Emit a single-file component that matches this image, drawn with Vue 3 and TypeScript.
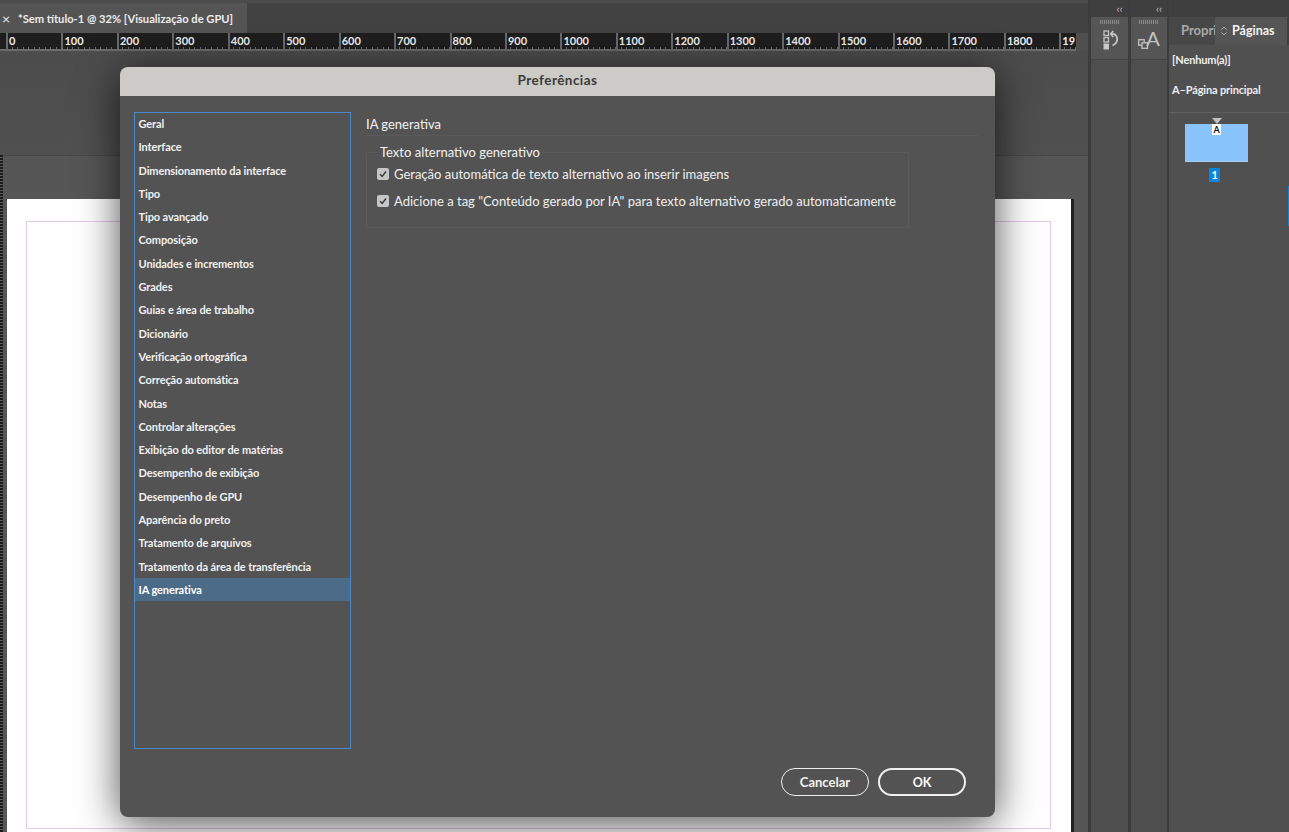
<script setup lang="ts">
const rulerLabels: string[] = ['0','100','200','300','400','500','600','700','800','900','1000','1100','1200','1300','1400','1500','1600','1700','1800','19']
const prefs: string[] = ['Geral','Interface','Dimensionamento da interface','Tipo','Tipo avançado','Composição','Unidades e incrementos','Grades','Guias e área de trabalho','Dicionário','Verificação ortográfica','Correção automática','Notas','Controlar alterações','Exibição do editor de matérias','Desempenho de exibição','Desempenho de GPU','Aparência do preto','Tratamento de arquivos','Tratamento da área de transferência','IA generativa']
const options: string[] = ['Geração automática de texto alternativo ao inserir imagens','Adicione a tag "Conteúdo gerado por IA" para texto alternativo gerado automaticamente']
</script>

<template>
  <div class="app">
    <div class="docs">
      <div class="tabbar">
        <div class="tab"><span class="close">×</span><span class="tabname">*Sem título-1 @ 32% [Visualização de GPU]</span></div>
      </div>
      <div class="ruler">
        <div v-for="l in rulerLabels" :key="l" class="mark">{{ l }}</div>
      </div>
      <div class="board">
        <div class="paste-top"></div>
        <div class="paste-band"></div>
        <div class="spread">
          <div class="vruler"></div>
          <div class="page"><div class="guide"></div></div>
          <div class="page-edge"></div>
        </div>
      </div>
    </div>

    <div class="dock">
      <div class="collapse"><span>‹‹</span></div>
      <div class="dock-head">
        <div class="grip"></div>
        <svg class="ico" width="16" height="20" viewBox="0 0 16 20">
          <rect x="1" y="1" width="4.500" height="4.500" fill="none" stroke="#c4c4c4" stroke-width="1.300"/>
          <rect x="1" y="7.500" width="4.500" height="4.500" fill="none" stroke="#c4c4c4" stroke-width="1.300"/>
          <rect x="0.500" y="13.500" width="5.500" height="6" fill="#c8c8c8"/>
          <path d="M7.500 4h5M7.500 4l2.800 -2.800M7.500 4l2.800 2.800M11 4c4.500 2.500 4.500 8.500 -1.500 11.500" fill="none" stroke="#c8c8c8" stroke-width="1.700"/>
        </svg>
      </div>
    </div>
    <div class="dock second">
      <div class="collapse"><span>‹‹</span></div>
      <div class="dock-head">
        <div class="grip"></div>
        <div class="char-ico">
          <svg width="11" height="10" viewBox="0 0 11 10">
            <rect x="0.700" y="0.700" width="5.500" height="5.500" fill="none" stroke="#c4c4c4" stroke-width="1.300"/>
            <rect x="4" y="3.800" width="5.500" height="5.500" fill="#555" stroke="#c4c4c4" stroke-width="1.300"/>
          </svg>
          <span class="big-a">A</span>
        </div>
      </div>
    </div>

    <div class="pages">
      <div class="pages-tabs">
        <div class="ptab">Propri</div>
        <div class="ptab active">
          <svg class="updown" width="6" height="10" viewBox="0 0 6 10"><path d="M0.500 3.500L3 1l2.500 2.500M0.500 6.500L3 9l2.500-2.500" fill="none" stroke="#aaa"/></svg>
          <span>Páginas</span>
        </div>
      </div>
      <div class="parent">[Nenhum(a)]</div>
      <div class="parent second-parent">A–Página principal</div>
      <div class="thumbs">
        <div class="tri"></div>
        <div class="thumb"><span class="a-badge">A</span></div>
        <div class="num">1</div>
      </div>
      <div class="edge-mark"></div>
    </div>

    <section class="dialog">
      <header class="title">Preferências</header>
      <div class="dlg-body">
        <ul class="list">
          <li v-for="p in prefs" :key="p" :class="{ sel: p === 'IA generativa' }">{{ p }}</li>
        </ul>
        <div class="content">
          <h2>IA generativa</h2>
          <fieldset class="group">
            <legend>Texto alternativo generativo</legend>
            <label v-for="o in options" :key="o" class="opt">
              <span class="check">
                <svg width="10" height="10" viewBox="0 0 10 10"><path d="M2 5.200l2.200 2.300 3.800-5" fill="none" stroke="#3a3a3a" stroke-width="1.400"/></svg>
              </span>
              {{ o }}
            </label>
          </fieldset>
        </div>
      </div>
      <footer class="actions">
        <button class="btn">Cancelar</button>
        <button class="btn primary">OK</button>
      </footer>
    </section>
  </div>
</template>

<style>
html, body { margin: 0; background: #3f3f3f; overflow: hidden; }
</style>

<style scoped>
.app {
  position: relative;
  width: 1289px;
  height: 832px;
  display: flex;
  overflow: hidden;
  background: #3c3c3c;
  font-family: Lato, "Noto Sans", sans-serif;
  color: #f2f2f2;
}
.docs { width: 1088px; flex: none; display: flex; flex-direction: column; background: #4f4f4f; }
.tabbar { height: 33px; flex: none; background: #424242; border-top: 3px solid #4b4b4b; box-sizing: border-box; }
.tab {
  width: 247px; height: 30px; background: #545454; display: flex; align-items: center;
  font-size: 11.150px; font-weight: 700; color: #ececec; padding-left: 2px; box-sizing: border-box;
}
.close { font-size: 14px; font-weight: 400; width: 16px; }
.tabname { white-space: nowrap; }
.ruler {
  height: 18px; flex: none; display: flex; padding-left: 6px; width: 1076px; box-sizing: border-box;
  background:
    repeating-linear-gradient(90deg, #6e6e6e 0 1px, transparent 1px 5.540px) 6px 100% / 100% 2px no-repeat,
    #1e1e1e;
  border-bottom: 2px solid #6c6c6c;
}
.mark {
  flex: 0 0 55.450px; box-sizing: border-box; border-left: 2px solid #6a6a6a; padding-left: 1px;
  font-size: 11px; font-weight: 700; line-height: 16px; color: #eee;
}
.mark:last-child { flex: 0 0 auto; }
.board { flex: 1; display: flex; flex-direction: column; min-height: 0; }
.paste-top { height: 104px; flex: none; background: linear-gradient(180deg, #4c4c4c, #505050); border-bottom: 1px solid #464646; }
.paste-band { height: 43px; flex: none; background: #565656; }
.spread { flex: 1; display: flex; min-height: 0; background: #565656; }
.vruler {
  width: 3px; margin-right: 4px; flex: none;
  background: repeating-linear-gradient(180deg, #1c1c1c 0 2px, #5a5a5a 2px 3px);
  margin-top: -44px;
}
.page { width: 1064px; flex: none; background: #fff; box-sizing: border-box; padding: 22px 20px 0 19px; }
.guide { height: 608px; border: 1px solid #e6c8ea; box-sizing: border-box; }
.page-edge { width: 3px; flex: none; background: #1f1f1f; }

.dock { width: 37px; margin-left: 3px; flex: none; display: flex; flex-direction: column; background: #4e4e4e; }
.second { margin-left: 3px; width: 36px; }
.collapse { height: 17px; background: #3f3f3f; display: flex; justify-content: center; align-items: center; color: #bcbcbc; font-size: 11px; line-height: 17px; }
.collapse span { margin-left: 20px; }
.dock-head { height: 43px; background: #555; border-bottom: 1px solid #444; display: flex; flex-direction: column; align-items: center; box-sizing: border-box; }
.grip { width: 20px; height: 4px; margin-top: 3px; background: repeating-linear-gradient(90deg, #8a8a8a 0 1px, transparent 1px 2px); }
.ico { margin-top: 6px; margin-left: 3px; }
.char-ico { display: flex; align-items: flex-end; margin-top: 4px; margin-left: 0; color: #c4c4c4; }
.char-ico svg { margin-bottom: 4px; margin-right: -3px; }
.big-a { font-size: 20px; line-height: 20px; margin-bottom: 5px; font-weight: 400; }

.pages { position: relative; margin-left: 2px; flex: 1; background: #505050; font-size: 11px; letter-spacing: -0.150px; font-weight: 700; color: #eee; }
.pages-tabs { height: 45px; padding-top: 17px; box-sizing: border-box; display: flex; background: #3f3f3f; letter-spacing: 0; }
.ptab { width: 46px; background: #474747; color: #a9a9a9; font-size: 13px; font-weight: 700; padding: 5px 0 0 12px; box-sizing: border-box; white-space: nowrap; }
.ptab.active { width: 72px; background: #555; color: #f4f4f4; font-size: 12.500px; padding: 6px 0 0 6px; display: flex; align-items: flex-start; }
.updown { margin: 3px 5px 0 0; flex: none; }
.parent { padding: 8px 0 0 3px; line-height: 14px; height: 31px; box-sizing: border-box; white-space: nowrap; }
.second-parent { height: 37px; padding-top: 7px; border-bottom: 1px solid #5f5f5f; }
.thumbs { display: flex; flex-direction: column; align-items: center; width: 95px; }
.tri { width: 0; height: 0; border-left: 5px solid transparent; border-right: 5px solid transparent; border-top: 6px solid #c0c0c0; margin-top: 5px; }
.thumb { width: 63px; height: 38px; background: #8ac4fd; border-bottom: 1px solid #a8cdee; box-sizing: border-box; display: flex; justify-content: center; align-items: flex-start; }
.a-badge { width: 9px; height: 11px; background: #fff; color: #111; font-size: 9px; line-height: 12px; text-align: center; font-weight: 700; }
.num { width: 11px; height: 14px; margin: 6px 4px 0 0; background: #0a84dc; color: #fff; font-size: 11px; font-weight: 700; line-height: 14px; text-align: center; }
.edge-mark { position: absolute; right: 0; top: 186px; width: 1px; height: 40px; background: #0a84dc; }

.dialog {
  position: absolute; left: 120px; top: 67px; width: 875px; height: 750px;
  border-radius: 8px; overflow: hidden; background: #535353;
  box-shadow: 0 6px 42px rgba(0, 0, 0, 0.7);
  display: flex; flex-direction: column;
}
.title { height: 29px; flex: none; background: #cdcbc8; color: #3a3a3a; font-size: 13.500px; letter-spacing: 0.450px; font-weight: 700; text-align: center; line-height: 27px; }
.dlg-body { flex: 1; display: flex; padding: 16px 17px 0 14px; min-height: 0; }
.list {
  width: 217px; height: 637px; flex: none; box-sizing: border-box; margin: 0; padding: 0;
  list-style: none; border: 1.500px solid #4a8acb;
}
.list li { height: 23.300px; line-height: 22px; padding-left: 3.500px; font-size: 11px; letter-spacing: -0.100px; font-weight: 700; white-space: nowrap; color: #f0f0f0; }
.list li.sel { margin-top: -1px; line-height: 24px; background: #4b6b89; color: #fff; }
.content { flex: 1; padding-left: 15px; }
.content h2 { margin: 0; height: 24px; width: 612px; font-size: 13px; font-weight: 400; line-height: 24px; border-bottom: 1px solid #5a5a5a; box-sizing: border-box; color: #f2f2f2; }
.group {
  margin: 9px 0 0; padding: 1px 0 0 10px; width: 543px; height: 83px; box-sizing: border-box;
  border: 1px solid #5b5b5b; border-radius: 2px; min-inline-size: 0;
}
.group legend { padding: 0 2px; margin-left: 1px; font-size: 13px; font-weight: 400; line-height: 14px; color: #f2f2f2; }
.opt { display: flex; align-items: center; gap: 5px; height: 27.500px; font-size: 13px; font-weight: 400; color: #f0f0f0; white-space: nowrap; }
.check { width: 12px; height: 12px; background: #c6c6c6; border-radius: 2px; display: flex; align-items: center; justify-content: center; flex: none; }
.actions { height: 49px; flex: none; display: flex; justify-content: flex-end; gap: 9px; padding: 0 29px 0 0; box-sizing: border-box; }
.btn {
  width: 88px; height: 28px; box-sizing: border-box; border: 1px solid #f0f0f0; border-radius: 14px;
  background: transparent; color: #f2f2f2; font-family: inherit; font-size: 13px; font-weight: 700; padding: 0;
}
.btn.primary { border-width: 2px; color: #fff; font-size: 12.500px; }
</style>
